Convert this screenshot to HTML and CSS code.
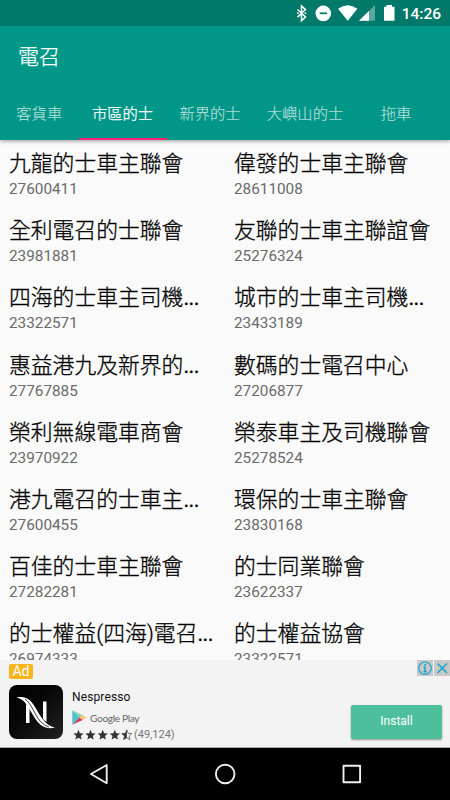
FILE: index.html
```html
<!DOCTYPE html>
<html lang="zh-Hant">
<head>
<meta charset="utf-8">
<title>電召</title>
<link rel="stylesheet" href="styles.css">
</head>
<body>
<div class="screen">
  <header class="appbar">
    <div class="status">
      <svg class="status-icons" width="110" height="26" viewBox="0 0 110 26">
        <path d="M7.5 9.5l8 7.5-4 3.7V6l4 3.6-8 7.5" fill="none" stroke="#fff" stroke-width="1.5"/>
        <path d="M7 13.3h1.6M14.6 13.3h1.7" stroke="#fff" stroke-width="1.5"/>
        <circle cx="33.3" cy="13.4" r="7.8" fill="#fff"/>
        <path d="M29.7 13.3h7.4" stroke="#00796b" stroke-width="1.7"/>
        <path d="M48 8.800Q57.700 1.600 67.400 8.800L57.700 20.700z" fill="#fff"/>
        <path d="M85 5v15.700H69z" fill="#fff" opacity=".35"/>
        <path d="M79 10.900v9.800H69z" fill="#fff"/>
        <path d="M94 6.700h2.500V5h5.500v1.700h2.500v14H94z" fill="#fff"/>
      </svg>
      <span class="clock">14:26</span>
    </div>
    <h1 class="title">電召</h1>
    <nav class="tabs">
      <span class="tab">客貨車</span>
      <span class="tab active">市區的士</span>
      <span class="tab">新界的士</span>
      <span class="tab">大嶼山的士</span>
      <span class="tab">拖車</span>
    </nav>
  </header>
  <main class="list">
    <div class="item"><div class="name">九龍的士車主聯會</div><div class="phone">27600411</div></div>
    <div class="item"><div class="name">偉發的士車主聯會</div><div class="phone">28611008</div></div>
    <div class="item"><div class="name">全利電召的士聯會</div><div class="phone">23981881</div></div>
    <div class="item"><div class="name">友聯的士車主聯誼會</div><div class="phone">25276324</div></div>
    <div class="item"><div class="name">四海的士車主司機<span class="dots">...</span></div><div class="phone">23322571</div></div>
    <div class="item"><div class="name">城市的士車主司機<span class="dots">...</span></div><div class="phone">23433189</div></div>
    <div class="item"><div class="name">惠益港九及新界的<span class="dots">...</span></div><div class="phone">27767885</div></div>
    <div class="item"><div class="name">數碼的士電召中心</div><div class="phone">27206877</div></div>
    <div class="item"><div class="name">榮利無線電車商會</div><div class="phone">23970922</div></div>
    <div class="item"><div class="name">榮泰車主及司機聯會</div><div class="phone">25278524</div></div>
    <div class="item"><div class="name">港九電召的士車主<span class="dots">...</span></div><div class="phone">27600455</div></div>
    <div class="item"><div class="name">環保的士車主聯會</div><div class="phone">23830168</div></div>
    <div class="item"><div class="name">百佳的士車主聯會</div><div class="phone">27282281</div></div>
    <div class="item"><div class="name">的士同業聯會</div><div class="phone">23622337</div></div>
    <div class="item"><div class="name">的士權益(四海)電召<span class="dots">...</span></div><div class="phone">26974333</div></div>
    <div class="item"><div class="name">的士權益協會</div><div class="phone">23322571</div></div>
  </main>
  <section class="ad">
    <div class="ad-left">
      <span class="ad-badge">Ad</span>
      <svg class="logo" width="54" height="54" viewBox="0 0 54 54">
        <defs><linearGradient id="bg" x1="0" y1="0" x2="1" y2="1"><stop offset="0" stop-color="#000"/><stop offset=".4" stop-color="#060606"/><stop offset="1" stop-color="#222"/></linearGradient></defs>
        <rect width="54" height="54" rx="8" fill="url(#bg)"/>
        <path d="M17 19v19h3.500V22z" fill="#fff"/>
        <path d="M34 16.500h3.500V37L34 34z" fill="#fff"/>
        <path d="M7.500 12.500C17 10.500 21.500 15 25 20.500C31 30 36 41 46 42.500C38 45 31 41 26.500 34C20 24 16.500 14 7.500 12.500z" fill="#fff"/>
        <path d="M16 14C23 19 25 29 31 36Q35 40.500 40 42" fill="none" stroke="#080808" stroke-width=".8"/>
      </svg>
    </div>
    <div class="ad-info">
      <div class="ad-name">Nespresso</div>
      <div class="play">
        <svg width="15" height="15" viewBox="0 0 15 15">
          <path d="M.3.300L7.500 7.500.3 14.700z" fill="#51bfd2"/>
          <path d="M.3.300L10.500 5 7.500 7.700z" fill="#83d8b0"/>
          <path d="M10.500 4.900L14.500 7.500 10.500 10.100 7.500 7.500z" fill="#f8c574"/>
          <path d="M7.500 7.500L10.500 10.100.3 14.700z" fill="#cf3558"/>
        </svg>
        <span class="play-text"><span>Google</span><span>Play</span></span>
      </div>
      <div class="rating">
        <svg width="60" height="12" viewBox="0 0 60 12">
          <defs><path id="star" d="M5.500.800L6.900 4.300 10.600 4.600 7.800 7 8.700 10.600 5.500 8.700 2.300 10.600 3.200 7 .4 4.600 4.100 4.300z"/></defs>
          <g fill="#333"><use href="#star"/><use href="#star" x="12"/><use href="#star" x="24.200"/><use href="#star" x="36.300"/>
          <path d="M53.800.8V8.700L50.600 10.600 51.500 7 48.700 4.600 52.400 4.300z"/></g>
          <use href="#star" x="48.300" fill="none" stroke="#444" stroke-width=".7"/>
        </svg>
        <span>(49,124)</span>
      </div>
    </div>
    <div class="install">Install</div>
    <div class="ad-controls">
      <svg width="16" height="16" viewBox="0 0 16 16"><circle cx="8" cy="8.200" r="6.200" fill="none" stroke="#12a6cb" stroke-width="1.200"/><path d="M8 4v2M6.500 7.300H8V12M6.300 11.800h3.500" fill="none" stroke="#12a6cb" stroke-width="1.500"/></svg>
      <svg width="16" height="16" viewBox="0 0 16 16"><path d="M3.500 3.500l9.500 9.500M13 3.500L3.500 13" stroke="#12a6cb" stroke-width="1.500"/></svg>
    </div>
  </section>
  <footer class="navbar">
    <svg width="450" height="52" viewBox="0 0 450 52" fill="none" stroke="#eee" stroke-width="1.900" stroke-linejoin="round">
      <path d="M106.700 17v18.200L91 26z"/>
      <circle cx="225.200" cy="26" r="9.300"/>
      <path d="M343.500 17.700h16.600v16.600h-16.600z"/>
    </svg>
  </footer>
</div>
</body>
</html>
```

FILE: styles.css
```css
* { box-sizing: border-box; }
body {
  margin: 0;
  font-family: Roboto, "Noto Sans CJK TC", sans-serif;
}
.screen {
  display: flex;
  flex-direction: column;
  width: 450px;
  height: 800px;
  overflow: hidden;
  background: #fafafa;
}
.appbar {
  position: relative;
  z-index: 1;
  flex: none;
  height: 140px;
  background: #009788;
  color: #fff;
  box-shadow: 0 1px 4px rgba(0, 0, 0, .4);
}
.status {
  display: flex;
  justify-content: flex-end;
  height: 26px;
  padding-right: 9px;
  background: #00796b;
}
.status-icons { margin-right: 2px; }
.clock {
  font-size: 15.500px;
  font-weight: 500;
  line-height: 28px;
}
.title {
  height: 62px;
  margin: 0;
  padding-left: 18px;
  font-size: 21px;
  font-weight: 300;
  line-height: 63px;
  -webkit-text-stroke: .25px currentColor;
}
.tabs {
  display: grid;
  grid-template-columns: 78.500px 88px 87px 103px 79px;
  grid-template-rows: 51.500px;
  height: 52px;
}
.tab {
  font-size: 15.300px;
  font-weight: 300;
  line-height: 52px;
  text-align: center;
  color: rgba(255, 255, 255, .7);
  -webkit-text-stroke: .12px currentColor;
}
.active {
  height: 51.500px;
  color: #fff;
  border-bottom: 2px solid #ff1f78;
  -webkit-text-stroke: .25px currentColor;
}
.list {
  display: grid;
  flex: none;
  grid-template-columns: 225px 225px;
  grid-auto-rows: 67.200px;
  height: 520px;
  padding-top: 7px;
  overflow: hidden;
}
.item { padding-left: 9px; white-space: nowrap; }
.name {
  height: 33px;
  font-size: 21.800px;
  font-weight: 300;
  line-height: 34px;
  color: #000;
  -webkit-text-stroke: .3px currentColor;
}
.dots { font-weight: 400; letter-spacing: -.6px; }
.phone {
  height: 18px;
  font-size: 15.300px;
  line-height: 18px;
  color: #6a6a6a;
}
.ad {
  position: relative;
  display: flex;
  flex: none;
  height: 88px;
  padding-left: 9px;
  background: #f3f3f3;
  border-bottom: 1px solid #aaa;
}
.ad-left {
  display: flex;
  flex-direction: column;
  width: 63px;
  padding-top: 4px;
}
.ad-badge {
  width: 24px;
  height: 15px;
  margin-bottom: 6px;
  border-radius: 2px;
  background: #fcb41c;
  color: #fff;
  font-size: 14px;
  line-height: 14px;
  text-align: center;
}
.ad-info { padding-top: 29px; }
.ad-name {
  height: 17px;
  color: #111;
  font-size: 12px;
  line-height: 17px;
  letter-spacing: .12px;
}
.play {
  display: flex;
  align-items: center;
  height: 21px;
  margin-top: 1px;
}
.play-text {
  display: flex;
  gap: 2px;
  margin-left: 3px;
  font-family: Lato, sans-serif;
  font-size: 10.200px;
  letter-spacing: -.35px;
  color: #666;
}
.rating {
  display: flex;
  align-items: center;
  height: 13px;
  gap: 2px;
  font-size: 11px;
  color: #777;
}
.rating svg { position: relative; left: 1px; }
.install {
  width: 91px;
  height: 34px;
  margin: 45px 8px 0 auto;
  border-radius: 2px;
  background: #4dbf9b;
  box-shadow: 0 1px 2px rgba(0, 0, 0, .4);
  color: #fff;
  font-size: 12px;
  line-height: 32px;
  text-align: center;
}
.ad-controls {
  position: absolute;
  top: 0;
  right: 0;
  display: flex;
  gap: 1px;
}
.ad-controls svg { background: #c8c8c8; }
.navbar {
  flex: none;
  height: 52px;
  background: #000;
}
```
